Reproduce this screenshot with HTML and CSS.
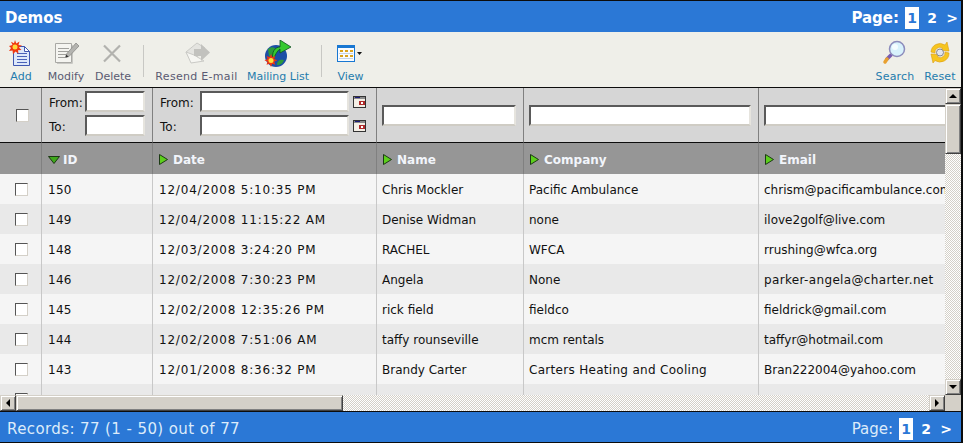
FILE: index.html
```html
<!DOCTYPE html>
<html lang="en">
<head>
<meta charset="UTF-8" />
<title>Demos</title>
<link rel="stylesheet" href="styles.css">
</head>
<body>

<div class="panel">
  <div class="titlebar">
    <span class="title">Demos</span>
    <div class="pager">
      <span>Page:</span>
      <span class="page current">1</span>
      <span class="page">2</span>
      <span class="page">&gt;</span>
    </div>
  </div>

  <div class="toolbar">
    <a class="tool tool-add">
      <svg width="24" height="28" viewBox="0 0 24 28">
        <path d="M4.500 6.500h11l5 5v14h-16z" fill="#dde8fa" stroke="#3f57b0"/>
        <path d="M15.500 6.500v5h5z" fill="#fff" stroke="#3f57b0"/>
        <path d="M8 13.500h10M8 16.500h10M8 19.500h10M8 22.500h10" stroke="#4a62b8"/>
        <path d="M6 0l1.300 3.500L10.500 1.500 9.500 5l3.500.5-3 2 2.500 2.500-3.500.2.500 3.500-3-2.200-2.500 2.700-.5-3.700-3.500.5 2-3L0 6l3.500-1-1.500-3.300L5 3.300z" fill="#f0380f"/>
        <circle cx="6" cy="7" r="2.500" fill="#ffd83a"/>
      </svg>
      <span class="tool-label blue">Add</span>
    </a>
    <a class="tool tool-modify">
      <svg width="26" height="28" viewBox="0 0 26 28">
        <path d="M2.500 3.500h16v19h-16z" fill="#f4f4f0" stroke="#a8a8a4"/>
        <path d="M19.500 5v18.500H4" fill="none" stroke="#c8c8c4"/>
        <path d="M5 8.500h11M5 11.500h11M5 14.500h8M5 17.500h7" stroke="#a0a09c"/>
        <path d="M23 3l3 3-10 10.500-3.500 1 1-3.500z" fill="#b4b4b0" stroke="#8c8c88" stroke-width=".8"/>
        <path d="M12.500 17.500l.8-3 2.200 2.200z" fill="#333"/>
      </svg>
      <span class="tool-label">Modify</span>
    </a>
    <a class="tool tool-delete">
      <svg width="24" height="28" viewBox="0 0 24 28">
        <path d="M3 5.500l16 16M19 5.500l-16 16" stroke="#b2b2ae" stroke-width="2.200" fill="none"/>
      </svg>
      <span class="tool-label">Delete</span>
    </a>
    <span class="tool-sep"></span>
    <a class="tool tool-resend">
      <svg width="37" height="28" viewBox="0 0 37 28">
        <path d="M8 12L19 3l8 5-13 15z" fill="#e4e4e0" stroke="#cacac6"/>
        <path d="M8 12l5 11 13-2-10-6z" fill="#f6f6f2" stroke="#cacac6"/>
        <path d="M16 9h7V4l9 8.500-9 8.500v-5h-7z" fill="#c2c2be"/>
      </svg>
      <span class="tool-label">Resend E-mail</span>
    </a>
    <a class="tool tool-mailing">
      <svg width="32" height="28" viewBox="0 0 32 28">
        <circle cx="14" cy="16" r="11" fill="#1b4ea6"/>
        <path d="M6 9c4-3 7-2 8 1s-2 7-7 6zM15 25c0-4 3-6 7-5-1 3-3 5-7 5z" fill="#2c9a3c"/>
        <path d="M11 21c-2-9 2-14 7-14V0l11 7-11 6V9c-3 2-5 6-7 12z" fill="#35c92f" stroke="#0f4f22" stroke-width=".8"/>
        <path d="M9 14l1.300 3 3-1-1 3 3 1.300-3 1.500 1 3-3-1L9 27l-1.500-3.200-3 1 1-3-3-1.500 3-1.300-1-3 3 1z" fill="#e8341a"/>
        <circle cx="9" cy="20.500" r="2.500" fill="#ffe23a"/>
      </svg>
      <span class="tool-label blue">Mailing List</span>
    </a>
    <span class="tool-sep"></span>
    <a class="tool tool-view">
      <svg width="27" height="28" viewBox="0 0 27 28">
        <rect x=".5" y="5.500" width="17" height="16" fill="#f8fbff" stroke="#1877d2"/>
        <rect x="0" y="5" width="18" height="3" fill="#1877d2"/>
        <path d="M3 10h3v2H3zM8 10h3v2H8zM13 10h3v2h-3zM3 15h3v2H3zM8 15h3v2H8zM13 15h3v2h-3z" fill="#d9a21c"/>
        <path d="M2 13.500h14M2 18.500h14" stroke="#c6d4e4"/>
        <path d="M20 12h5l-2.500 3z" fill="#111"/>
      </svg>
      <span class="tool-label blue">View</span>
    </a>
    <div class="toolbar-right">
      <a class="tool tool-search">
        <svg width="28" height="28" viewBox="0 0 28 28">
          <path d="M10 15l-4 4" stroke="#7a5cb0" stroke-width="3.500" stroke-linecap="round"/>
          <path d="M6 19l-2 3" stroke="#e8a030" stroke-width="3.500" stroke-linecap="round"/>
          <circle cx="16" cy="9" r="7.500" fill="#d8f2fc" stroke="#8c8cbc" stroke-width="1.500"/>
          <circle cx="14" cy="7" r="3" fill="#f4fcff"/>
        </svg>
        <span class="tool-label blue">Search</span>
      </a>
      <a class="tool tool-reset">
        <svg width="28" height="28" viewBox="0 0 28 28">
          <path d="M5 12a9 9 0 0 1 14-7l2-3 2 9-9-.5 2.500-2.500A5 5 0 0 0 9 13z" fill="#f6c51f" stroke="#dc9c10" stroke-width=".6"/>
          <path d="M23 13a9 9 0 0 1-14 7.500L7 23l-2-9 9 .5-2.500 2.500a5 5 0 0 0 7.500-5z" fill="#f6c51f" stroke="#dc9c10" stroke-width=".6"/>
          <circle cx="14" cy="12.500" r="3.500" fill="#e2e6ec" stroke="#85858f"/>
        </svg>
        <span class="tool-label blue">Reset</span>
      </a>
    </div>
  </div>

  <div class="grid-area">
    <div class="grid-main">
      <div class="grid-view">
        <table class="grid">
          <colgroup>
            <col class="c-check"><col class="c-id"><col class="c-date"><col class="c-name"><col class="c-company"><col class="c-email">
          </colgroup>
          <thead>
            <tr class="filters">
              <td class="check"><input type="checkbox"></td>
              <td class="range-cell">
                <div class="range"><label>From:</label><input type="text" class="box id-box"></div>
                <div class="range"><label>To:</label><input type="text" class="box id-box"></div>
              </td>
              <td class="range-cell">
                <div class="range date-range">
                  <label>From:</label><input type="text" class="box date-box">
                  <svg class="cal" width="13" height="12" viewBox="0 0 13 12"><rect x=".5" y=".5" width="12" height="11" fill="#f4efe6" stroke="#333"/><rect x="1" y="1" width="11" height="2" fill="#8a8a8a"/><rect x="2" y="1" width="5" height="1" fill="#1c1c7c"/><rect x="6" y="5" width="6" height="4" fill="#b02a2a"/><rect x="8" y="6" width="2" height="2" fill="#fff"/></svg>
                </div>
                <div class="range date-range">
                  <label>To:</label><input type="text" class="box date-box">
                  <svg class="cal" width="13" height="12" viewBox="0 0 13 12"><rect x=".5" y=".5" width="12" height="11" fill="#f4efe6" stroke="#333"/><rect x="1" y="1" width="11" height="2" fill="#8a8a8a"/><rect x="2" y="1" width="5" height="1" fill="#1c1c7c"/><rect x="6" y="5" width="6" height="4" fill="#b02a2a"/><rect x="8" y="6" width="2" height="2" fill="#fff"/></svg>
                </div>
              </td>
              <td><input type="text" class="box name-box"></td>
              <td><input type="text" class="box company-box"></td>
              <td><input type="text" class="box email-box"></td>
            </tr>
            <tr class="heads">
              <th></th>
              <th><svg class="sort sort-id" width="12" height="8" viewBox="0 0 12 8"><path d="M.5.5h11L6 7.500z" fill="#3fa81c" stroke="#1c3a14"/></svg>ID</th>
              <th><svg class="sort" width="9" height="11" viewBox="0 0 9 11"><path d="M.5.5l8 5-8 5z" fill="#5ccf1c" stroke="#1c3a14"/></svg>Date</th>
              <th><svg class="sort" width="9" height="11" viewBox="0 0 9 11"><path d="M.5.5l8 5-8 5z" fill="#5ccf1c" stroke="#1c3a14"/></svg>Name</th>
              <th><svg class="sort" width="9" height="11" viewBox="0 0 9 11"><path d="M.5.5l8 5-8 5z" fill="#5ccf1c" stroke="#1c3a14"/></svg>Company</th>
              <th><svg class="sort" width="9" height="11" viewBox="0 0 9 11"><path d="M.5.5l8 5-8 5z" fill="#5ccf1c" stroke="#1c3a14"/></svg>Email</th>
            </tr>
          </thead>
          <tbody>
            <tr><td class="check"><input type="checkbox"></td><td>150</td><td>12/04/2008 5:10:35 PM</td><td>Chris Mockler</td><td>Pacific Ambulance</td><td>chrism@pacificambulance.com</td></tr>
            <tr><td class="check"><input type="checkbox"></td><td>149</td><td>12/04/2008 11:15:22 AM</td><td>Denise Widman</td><td>none</td><td>ilove2golf@live.com</td></tr>
            <tr><td class="check"><input type="checkbox"></td><td>148</td><td>12/03/2008 3:24:20 PM</td><td>RACHEL</td><td>WFCA</td><td>rrushing@wfca.org</td></tr>
            <tr><td class="check"><input type="checkbox"></td><td>146</td><td>12/02/2008 7:30:23 PM</td><td>Angela</td><td>None</td><td>parker-angela@charter.net</td></tr>
            <tr><td class="check"><input type="checkbox"></td><td>145</td><td>12/02/2008 12:35:26 PM</td><td>rick field</td><td>fieldco</td><td>fieldrick@gmail.com</td></tr>
            <tr><td class="check"><input type="checkbox"></td><td>144</td><td>12/02/2008 7:51:06 AM</td><td>taffy rounseville</td><td>mcm rentals</td><td>taffyr@hotmail.com</td></tr>
            <tr><td class="check"><input type="checkbox"></td><td>143</td><td>12/01/2008 8:36:32 PM</td><td>Brandy Carter</td><td>Carters Heating and Cooling</td><td>Bran222004@yahoo.com</td></tr>
            <tr><td class="check"><input type="checkbox"></td><td></td><td></td><td></td><td></td><td></td></tr>
          </tbody>
        </table>
      </div>
      <div class="vscroll">
        <div class="sb-btn"><span class="arrow-up"></span></div>
        <div class="sb-thumb"></div>
        <div class="sb-track"></div>
        <div class="sb-btn"><span class="arrow-down"></span></div>
      </div>
    </div>
    <div class="hscroll">
      <div class="sb-btn"><span class="arrow-left"></span></div>
      <div class="sb-thumb h-thumb"></div>
      <div class="sb-track"></div>
      <div class="sb-btn"><span class="arrow-right"></span></div>
      <div class="sb-corner"></div>
    </div>
  </div>

  <div class="footerbar">
    <span class="records">Records: 77 (1 - 50) out of 77</span>
    <div class="pager pager-foot">
      <span>Page:</span>
      <span class="page current">1</span>
      <span class="page">2</span>
      <span class="page">&gt;</span>
    </div>
  </div>
</div>

</body>
</html>
```

FILE: styles.css
```css
* {
  box-sizing: border-box;
}
html, body {
  margin: 0;
  padding: 0;
}
body {
  font-family: "DejaVu Sans", Verdana, sans-serif;
  font-size: 12px;
  color: #111;
  background: #fff;
}
.panel {
  width: 963px;
  height: 443px;
  border-top: 1px solid #0c0c0c;
  border-right: 2px solid #0c0c0c;
  border-bottom: 1px solid #0c0c0c;
  display: flex;
  flex-direction: column;
  overflow: hidden;
}
.titlebar {
  height: 31px;
  flex: none;
  background: #2b78d6;
  color: #fff;
  display: flex;
  justify-content: space-between;
  align-items: center;
  padding: 3px 2px 0 5px;
}
.title {
  font-size: 15px;
  font-weight: bold;
}
.pager {
  display: flex;
  align-items: center;
  gap: 6px;
  font-size: 15px;
  font-weight: bold;
}
.page {
  width: 14px;
  text-align: center;
  font-size: 14px;
}
.page.current {
  height: 22px;
  line-height: 22px;
  background: #fff;
  color: #2b78d6;
}
.toolbar {
  height: 56px;
  flex: none;
  background: #efefe9;
  border-bottom: 1px solid #0c0c0c;
  display: flex;
  align-items: flex-start;
  padding: 8px 4px 0 9px;
}
.tool {
  display: flex;
  flex-direction: column;
  align-items: center;
  flex: none;
}
.tool svg {
  display: block;
  flex: none;
  margin-bottom: 2px;
}
.tool-add { width: 24px; }
.tool-modify { width: 38px; margin-left: 14px; }
.tool-delete { width: 38px; margin-left: 9px; }
.tool-resend { width: 83px; }
.tool-mailing { width: 64px; margin-left: 8px; }
.tool-view { width: 27px; margin-left: 4px; }
.tool-search { width: 40px; }
.tool-reset { width: 34px; margin-left: 8px; }
.tool-label {
  font-size: 11px;
  line-height: 14px;
  white-space: nowrap;
  color: #5a5a72;
}
.tool-resend .tool-label {
  letter-spacing: .3px;
}
.toolbar-right .tool-label {
  letter-spacing: .2px;
}
.tool-label.blue {
  color: #1f7cad;
}
.tool-sep {
  width: 1px;
  height: 32px;
  flex: none;
  margin: 5px 11px 0;
  background: #c8c8c4;
}
.toolbar-right {
  margin-left: auto;
  display: flex;
}
.grid-area {
  flex: 1;
  min-height: 0;
  display: flex;
  flex-direction: column;
}
.grid-main {
  flex: 1;
  min-height: 0;
  display: flex;
}
.grid-view {
  flex: 1;
  min-width: 0;
  overflow: hidden;
}
.grid {
  width: 1101px;
  table-layout: fixed;
  border-collapse: separate;
  border-spacing: 0;
}
.c-check { width: 42px; }
.c-id { width: 111px; }
.c-date { width: 224px; }
.c-name { width: 147px; }
.c-company { width: 235px; }
.c-email { width: 342px; }
.grid td, .grid th {
  padding: 0 0 0 5px;
  border-right: 1px solid #c8c8c8;
  text-align: left;
  white-space: nowrap;
  overflow: hidden;
}
.grid td.check {
  padding: 0 0 0 15px;
}
.grid .filters td.check {
  padding-left: 16px;
}
.grid input[type="checkbox"] {
  appearance: none;
  display: block;
  width: 13px;
  height: 13px;
  margin: 0;
  background: #fff;
  border: 1px solid;
  border-color: #555 #d4d0c8 #d4d0c8 #555;
}
.filters td {
  height: 55px;
  background: #d6d6d6;
  border-right-color: #808080;
  border-bottom: 1px solid #0c0c0c;
}
.grid .filters td.range-cell {
  vertical-align: top;
  padding: 3px 0 0 7px;
}
.range {
  display: flex;
  align-items: center;
  height: 21px;
  margin-bottom: 3px;
}
.range label {
  width: 36px;
  flex: none;
  margin-top: 3px;
}
.date-range label {
  width: 40px;
}
.box {
  display: block;
  height: 21px;
  padding: 0;
  background: #fff;
  border: 2px solid;
  border-color: #5a5a5a #e6e4de #cfccc4 #5a5a5a;
  outline: none;
}
.id-box { width: 60px; }
.date-box { width: 149px; }
.name-box { width: 134px; }
.company-box { width: 222px; }
.email-box { width: 240px; }
.cal {
  margin-left: 4px;
}
.grid .heads th {
  height: 31px;
  padding: 3px 0 0 6px;
  background: #969696;
  color: #f2f5fb;
  font-size: 12px;
  font-weight: bold;
  border-right-color: #808080;
}
.sort {
  margin-right: 5px;
  vertical-align: -1px;
}
.sort-id {
  margin-right: 3px;
  vertical-align: 0;
}
.grid tbody td {
  height: 30px;
  padding-top: 1px;
  font-size: 12px;
}
.grid tbody td:nth-child(2) {
  padding-left: 6px;
  letter-spacing: .3px;
}
.grid tbody td:nth-child(3) {
  padding-left: 6px;
  letter-spacing: .8px;
}
.grid tbody tr:nth-child(7) td:nth-child(5) {
  letter-spacing: .3px;
}
.grid tbody tr:nth-child(4) td:nth-child(6) {
  letter-spacing: .35px;
}
tbody tr:nth-child(odd) td {
  background: #f5f5f5;
}
tbody tr:nth-child(even) td {
  background: #e9e9e9;
}
.vscroll {
  width: 16px;
  flex: none;
  display: flex;
  flex-direction: column;
}
.hscroll {
  height: 17px;
  flex: none;
  display: flex;
  border-bottom: 1px solid #0c0c0c;
}
.sb-btn, .sb-thumb {
  background: #d4d0c8;
  border: 1px solid;
  border-color: #d4d0c8 #404040 #404040 #d4d0c8;
  box-shadow: inset 1px 1px #fff, inset -1px -1px #808080;
}
.sb-btn {
  width: 16px;
  height: 16px;
  flex: none;
  display: flex;
  align-items: center;
  justify-content: center;
}
.vscroll .sb-thumb {
  height: 50px;
  flex: none;
}
.h-thumb {
  width: 327px;
  flex: none;
}
.sb-track {
  flex: 1;
  background: repeating-conic-gradient(#d4d0c8 0 25%, #fff 0 50%) 0 0 / 2px 2px;
}
.sb-corner {
  width: 16px;
  flex: none;
  background: #d4d0c8;
}
.arrow-up, .arrow-down, .arrow-left, .arrow-right {
  width: 0;
  height: 0;
  border: 4px solid transparent;
}
.arrow-up { border-bottom-color: #000; border-top-width: 0; }
.arrow-down { border-top-color: #000; border-bottom-width: 0; }
.arrow-left { border-right-color: #000; border-left-width: 0; }
.arrow-right { border-left-color: #000; border-right-width: 0; }
.footerbar {
  height: 30px;
  flex: none;
  background: #2b78d6;
  color: #dcebfa;
  display: flex;
  justify-content: space-between;
  align-items: center;
  padding: 4px 8px 0 7px;
  font-size: 15px;
}
.records {
  letter-spacing: .4px;
}
.pager-foot {
  font-weight: normal;
}
.pager-foot .page {
  font-weight: bold;
  color: #fff;
}
.pager-foot .page.current {
  color: #2b78d6;
}
```
